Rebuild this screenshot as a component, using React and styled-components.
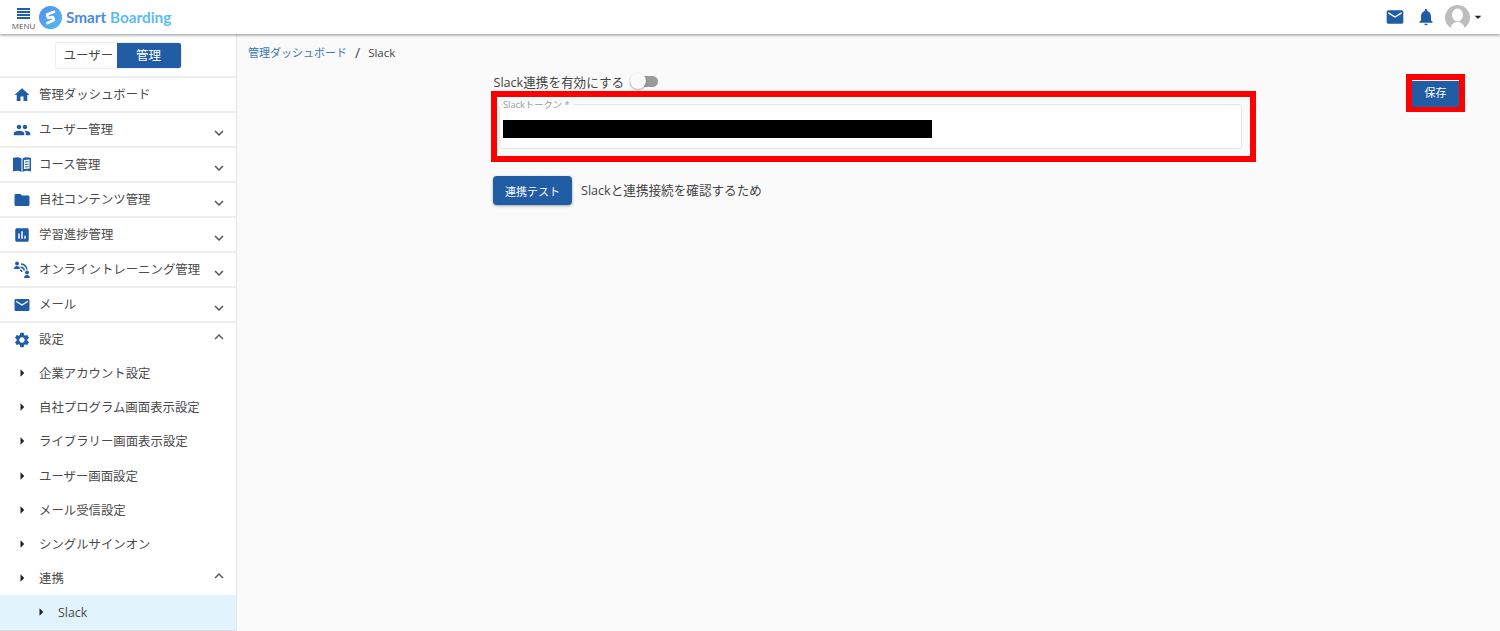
import React from "react";
import styled, { createGlobalStyle } from "styled-components";
import {
  MdHome, MdPeople, MdFolder, MdAssessment, MdMail, MdSettings, MdNotifications,
  MdExpandMore, MdExpandLess, MdArrowRight, MdArrowDropDown,
} from "react-icons/md";

const BLUE = "#215da4";
const FONT = `"Open Sans", "Noto Sans CJK JP", sans-serif`;

const Global = createGlobalStyle`
  html, body { margin: 0; padding: 0; height: 100%; }
  body { font-family: ${FONT}; background: #fafafa; color: #444; overflow: hidden; }
  * { box-sizing: border-box; }
`;

const Page = styled.div`
  width: 1500px;
  height: 631px;
  display: flex;
  flex-direction: column;
  overflow: hidden;
`;

const Header = styled.header`
  height: 34px;
  flex: none;
  background: #fff;
  display: flex;
  align-items: center;
  padding: 0 14px 0 12px;
  box-shadow: 0 1px 3px rgba(0, 0, 0, 0.45);
  position: relative;
  z-index: 2;
`;

const MenuButton = styled.div`
  width: 23px;
  display: flex;
  flex-direction: column;
  align-items: center;
  margin-top: 3px;
`;

const MenuBars = styled.span`
  width: 13px;
  height: 11px;
  background: repeating-linear-gradient(to bottom, ${BLUE} 0, ${BLUE} 2px, transparent 2px, transparent 3px);
`;

const MenuLabel = styled.span`
  font-size: 8px;
  line-height: 9px;
  margin-top: 2px;
  color: #555;
`;

const Brand = styled.div`
  display: flex;
  align-items: center;
  margin-left: 4px;
  gap: 4px;
`;

const BrandText = styled.span`
  font-family: "Lato", sans-serif;
  font-weight: 700;
  font-size: 15.3px;
  color: #4a8ae8;
`;

const BrandAccent = styled.span`
  color: #5cbcf5;
`;

const HeaderActions = styled.div`
  margin-left: auto;
  display: flex;
  align-items: center;
  gap: 11px;
  color: ${BLUE};
`;

const AccountMenu = styled.div`
  display: flex;
  align-items: center;
  margin-left: -2px;
`;

const Avatar = styled.svg`
  width: 25px;
  height: 25px;
  border-radius: 50%;
`;

const Body = styled.div`
  flex: 1;
  display: flex;
  min-height: 0;
`;

const Sidebar = styled.aside`
  width: 237px;
  flex: none;
  background: #fff;
  border-right: 1px solid #e6e6e6;
  box-shadow: 1px 0 2px rgba(0, 0, 0, 0.06);
  display: flex;
  flex-direction: column;
`;

const RoleBar = styled.div`
  height: 44px;
  flex: none;
  display: flex;
  justify-content: center;
  align-items: flex-start;
  padding-top: 8px;
  border-bottom: 2px solid #eee;
`;

const RoleTabs = styled.div`
  display: flex;
  height: 27px;
  width: 127px;
  border: 1px solid #ececec;
  border-radius: 3px;
  overflow: hidden;
`;

const RoleTab = styled.div`
  flex: ${(p) => (p.$active ? "0 0 64px" : "1")};
  display: flex;
  align-items: center;
  justify-content: center;
  font-size: 12.5px;
  padding: ${(p) => (p.$active ? "0 0 3px" : "0 0 3px 5px")};
  color: ${(p) => (p.$active ? "#fff" : "#444")};
  background: ${(p) => (p.$active ? BLUE : "#fff")};
`;

const NavRow = styled.div`
  height: 35px;
  flex: none;
  display: flex;
  align-items: center;
  padding: 0 8px 0 13px;
  border-bottom: 2px solid #eee;
  font-size: 12.4px;
  color: #4a4a4a;
`;

const SettingsRow = styled(NavRow)`
  height: 33px;
  border-bottom: 0;
`;

const NavIcon = styled.span`
  width: 18px;
  height: 18px;
  display: flex;
  align-items: center;
  justify-content: center;
  color: ${BLUE};
  margin-right: 8px;
`;

const NavLabel = styled.span`
  flex: 1;
  margin-top: -1px;
`;

const Chevron = styled.span`
  display: flex;
  color: #555;
  margin-top: ${(p) => (p.$open ? "-5px" : "6px")};
`;

const SubRow = styled.div`
  height: 34.2px;
  flex: none;
  display: flex;
  align-items: center;
  padding: ${(p) => (p.$nested ? "0 8px 0 32px" : "0 8px 0 13px")};
  font-size: 12.4px;
  color: #4a4a4a;
  background: ${(p) => (p.$active ? "#e1f4fe" : "transparent")};
  box-shadow: ${(p) => (p.$active ? "0 1px 0 #ddd" : "none")};
`;

const Caret = styled.span`
  width: 18px;
  display: flex;
  justify-content: center;
  color: #222;
  margin-right: 8px;
`;

const SubLabel = styled.span`
  flex: 1;
`;

const Main = styled.main`
  flex: 1;
  background: #fafafa;
  padding: 11px 35px 0 11px;
  min-width: 0;
`;

const Breadcrumb = styled.nav`
  display: flex;
  align-items: center;
  font-size: 11px;
  line-height: 16px;
  color: #444;
`;

const Crumb = styled.span`
  color: #3a76b8;
`;

const Slash = styled.span`
  margin: 0 8px;
  font-size: 14px;
`;

const CurrentCrumb = styled.span`
  font-size: 11.5px;
`;

const Content = styled.div`
  display: flex;
  align-items: flex-start;
  margin-top: 10px;
`;

const Form = styled.div`
  margin-left: 243px;
  width: 765px;
  display: flex;
  flex-direction: column;
`;

const ToggleLine = styled.div`
  display: flex;
  align-items: center;
  height: 20px;
  padding-left: 2.500px;
  font-size: 12.6px;
  color: #444;
`;

const Switch = styled.span`
  position: relative;
  width: 28px;
  height: 11px;
  margin: 1px 0 0 6px;
  border-radius: 6px;
  background: #9a9a9a;
`;

const Knob = styled.span`
  position: absolute;
  left: 0;
  top: -3px;
  width: 16px;
  height: 16px;
  border-radius: 50%;
  background: #fafafa;
  box-shadow: 0 1px 2px rgba(0, 0, 0, 0.35);
`;

const Highlight = styled.div`
  border: 6px solid #f00;
  height: 71px;
  padding: 3px 8px 0 2px;
`;

const Field = styled.fieldset`
  margin: 0;
  padding: 0 0 0 3px;
  height: 49px;
  background: #fff;
  border: 1px solid #e6e6e6;
  border-radius: 3px;
`;

const Legend = styled.legend`
  font-size: 9.3px;
  line-height: 9px;
  color: #999;
  padding: 0 3px 0 0;
`;

const Masked = styled.div`
  width: 429px;
  height: 18px;
  background: #000;
  margin-top: 11px;
`;

const TestLine = styled.div`
  display: flex;
  align-items: center;
  margin-top: 14px;
  padding-left: 2px;
`;

const TestButton = styled.button`
  width: 79px;
  height: 29px;
  border: 0;
  border-radius: 4px;
  background: ${BLUE};
  color: #fff;
  font-family: ${FONT};
  font-size: 11px;
  box-shadow: 0 1px 3px rgba(0, 0, 0, 0.35);
  padding: 0;
`;

const TestNote = styled.span`
  margin: -3px 0 0 9px;
  font-size: 12.6px;
  color: #444;
`;

const SaveFrame = styled.div`
  margin-left: auto;
  margin-top: 3px;
  border: 6px solid #f00;
  width: 59px;
  height: 38px;
`;

const SaveButton = styled.button`
  width: 100%;
  height: 100%;
  border: 0;
  background: ${BLUE};
  color: #fff;
  font-family: ${FONT};
  font-size: 11px;
  padding: 0 0 3px;
`;

const BrandMark = () => (
  <svg width="23" height="23" viewBox="0 0 23 23">
    <defs>
      <linearGradient id="bm" x1="0" y1="0" x2="1" y2="1">
        <stop offset="0" stopColor="#4f8cf0" />
        <stop offset="1" stopColor="#56bdf6" />
      </linearGradient>
    </defs>
    <circle cx="11.5" cy="11.5" r="11.5" fill="url(#bm)" />
    <path d="M16 5.500 8 8.500l1 3.500 5-1 1 3-7.500 3.500" fill="none" stroke="#fff" strokeWidth="2.600" strokeLinejoin="bevel" />
  </svg>
);

const BookIcon = () => (
  <svg width="18" height="15" viewBox="0 0 18 15">
    <path d="M0 1c3-1 6-1 8.500.5V15c-2.500-1.500-5.500-1.500-8.500-.5z" fill="currentColor" />
    <path d="M9.500 1.500C12 0 15 0 18 1v13.500c-3-1-6-1-8.500.5z" fill="currentColor" />
    <path d="M11 3v9l5.500-.5V2.500z" fill="#fff" />
    <path d="M12 5l3.500-.4M12 7.500l3.500-.3M12 10l3.500-.3" stroke="currentColor" strokeWidth="1" fill="none" />
  </svg>
);

const OnlineIcon = () => (
  <svg width="18" height="18" viewBox="0 0 18 18" fill="currentColor">
    <circle cx="4" cy="2.500" r="1.900" />
    <path d="M1 8c0-2 1.300-3 3-3s3 1 3 3z" />
    <circle cx="14" cy="11.500" r="1.900" />
    <path d="M11 17c0-2 1.300-3 3-3s3 1 3 3z" />
    <g fill="none" stroke="currentColor" strokeWidth="1.400">
      <path d="M8 3c3 .3 5.500 2.500 6 5.500" />
      <path d="M7.500 6c2 .2 3.500 1.500 4 3.500" />
      <path d="M7 9c1 .2 1.700 .8 2 2" />
    </g>
  </svg>
);

const mainNav = [
  [<MdHome size={20} />, "管理ダッシュボード", false],
  [<MdPeople size={22} />, "ユーザー管理", true],
  [<BookIcon />, "コース管理", true],
  [<MdFolder size={20} />, "自社コンテンツ管理", true],
  [<MdAssessment size={20} />, "学習進捗管理", true],
  [<OnlineIcon />, "オンライントレーニング管理", true],
  [<MdMail size={20} />, "メール", true],
];

const subNav = [
  "企業アカウント設定",
  "自社プログラム画面表示設定",
  "ライブラリー画面表示設定",
  "ユーザー画面設定",
  "メール受信設定",
  "シングルサインオン",
];

export default function App() {
  return (
    <Page>
      <Global />
      <Header>
        <MenuButton>
          <MenuBars />
          <MenuLabel>MENU</MenuLabel>
        </MenuButton>
        <Brand>
          <BrandMark />
          <BrandText>
            Smart <BrandAccent>Boarding</BrandAccent>
          </BrandText>
        </Brand>
        <HeaderActions>
          <MdMail size={20} />
          <MdNotifications size={20} />
          <AccountMenu>
            <Avatar viewBox="0 0 25 25">
              <rect width="25" height="25" fill="#bdbdbd" />
              <ellipse cx="12.500" cy="10" rx="5.500" ry="6.500" fill="#fff" />
              <path d="M5 25c.5-5 3.500-8 7.500-8s7 3 7.500 8z" fill="#fff" />
            </Avatar>
            <MdArrowDropDown size={16} color="#222" />
          </AccountMenu>
        </HeaderActions>
      </Header>
      <Body>
        <Sidebar>
          <RoleBar>
            <RoleTabs>
              <RoleTab>ユーザー</RoleTab>
              <RoleTab $active>管理</RoleTab>
            </RoleTabs>
          </RoleBar>
          {mainNav.map(([icon, label, more]) => (
            <NavRow key={label}>
              <NavIcon>{icon}</NavIcon>
              <NavLabel>{label}</NavLabel>
              {more && (
                <Chevron>
                  <MdExpandMore size={18} />
                </Chevron>
              )}
            </NavRow>
          ))}
          <SettingsRow>
            <NavIcon>
              <MdSettings size={20} />
            </NavIcon>
            <NavLabel>設定</NavLabel>
            <Chevron $open>
              <MdExpandLess size={18} />
            </Chevron>
          </SettingsRow>
          {subNav.map((label) => (
            <SubRow key={label}>
              <Caret>
                <MdArrowRight size={20} />
              </Caret>
              <SubLabel>{label}</SubLabel>
            </SubRow>
          ))}
          <SubRow>
            <Caret>
              <MdArrowRight size={20} />
            </Caret>
            <SubLabel>連携</SubLabel>
            <Chevron $open>
              <MdExpandLess size={18} />
            </Chevron>
          </SubRow>
          <SubRow $active $nested>
            <Caret>
              <MdArrowRight size={20} />
            </Caret>
            <SubLabel>Slack</SubLabel>
          </SubRow>
        </Sidebar>
        <Main>
          <Breadcrumb>
            <Crumb>管理ダッシュボード</Crumb>
            <Slash>/</Slash>
            <CurrentCrumb>Slack</CurrentCrumb>
          </Breadcrumb>
          <Content>
            <Form>
              <ToggleLine>
                Slack連携を有効にする
                <Switch>
                  <Knob />
                </Switch>
              </ToggleLine>
              <Highlight>
                <Field>
                  <Legend>Slackトークン *</Legend>
                  <Masked />
                </Field>
              </Highlight>
              <TestLine>
                <TestButton>連携テスト</TestButton>
                <TestNote>Slackと連携接続を確認するため</TestNote>
              </TestLine>
            </Form>
            <SaveFrame>
              <SaveButton>保存</SaveButton>
            </SaveFrame>
          </Content>
        </Main>
      </Body>
    </Page>
  );
}
